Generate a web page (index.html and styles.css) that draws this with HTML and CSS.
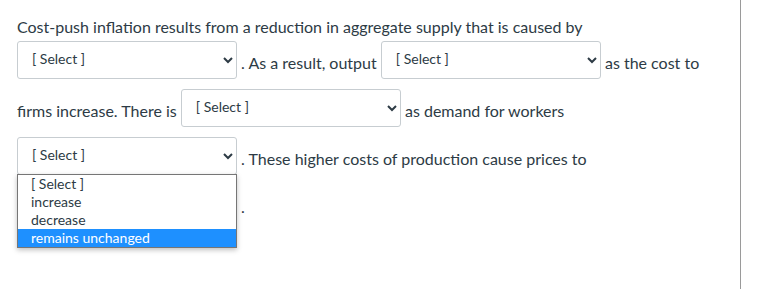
FILE: index.html
```html
<!DOCTYPE html>
<html lang="en">
<head>
  <meta charset="UTF-8">
  <meta name="viewport" content="width=device-width, initial-scale=1.0">
  <title>Question</title>
  <link rel="stylesheet" href="styles.css">
</head>
<body>
  <div class="page">
    <div class="question-text">
      Cost-push inflation results from a reduction in aggregate supply that is caused by
      <select class="answer"><option>[ Select ]</option></select>
      . As a result, output
      <select class="answer"><option>[ Select ]</option></select>
      as the cost to firms increase. There is
      <select class="answer"><option>[ Select ]</option></select>
      as demand for workers
      <span class="select-wrap">
        <select class="answer"><option>[ Select ]</option></select>
        <ul class="dropdown">
          <li>[ Select ]</li>
          <li>increase</li>
          <li>decrease</li>
          <li class="active">remains unchanged</li>
        </ul>
      </span>
      . These higher costs of production cause prices to
      <select class="answer"><option>[ Select ]</option></select>
      .
    </div>
  </div>
</body>
</html>
```

FILE: styles.css
```css
body{
  margin:0;
  font-family:Lato, "Noto Sans", sans-serif;
  color:#2d3b45;
  background:#fff;
}
.page{
  width:741px;
  height:289px;
  border-right:1px solid #9a9a9a;
  box-sizing:border-box;
}
.question-text{
  padding:13px 12px 0 17px;
  font-size:16px;
  line-height:28px;
}
.answer{
  width:220px;
  height:38px;
  margin-bottom:10px;
  padding:0 10px 3px;
  font-family:Lato, sans-serif;
  font-size:14px;
  color:#2d3b45;
  background:#fff;
  border:1px solid #c7cdd1;
  border-radius:3px;
  vertical-align:middle;
}
.select-wrap{
  position:relative;
  display:inline-block;
  vertical-align:middle;
  margin-bottom:10px;
}
.select-wrap .answer{
  display:block;
  margin:0;
}
.dropdown{
  position:absolute;
  top:37px;
  left:0;
  width:220px;
  margin:0;
  padding:0;
  list-style:none;
  background:#fff;
  border:1px solid #767676;
  box-sizing:border-box;
  box-shadow:0 2px 5px rgba(0,0,0,0.25);
  font-size:14px;
  line-height:18px;
  z-index:2;
}
.dropdown li{
  padding:0 13px;
  color:#2d3b45;
}
.dropdown .active{
  background:#1e90ff;
  color:#fff;
}
```
